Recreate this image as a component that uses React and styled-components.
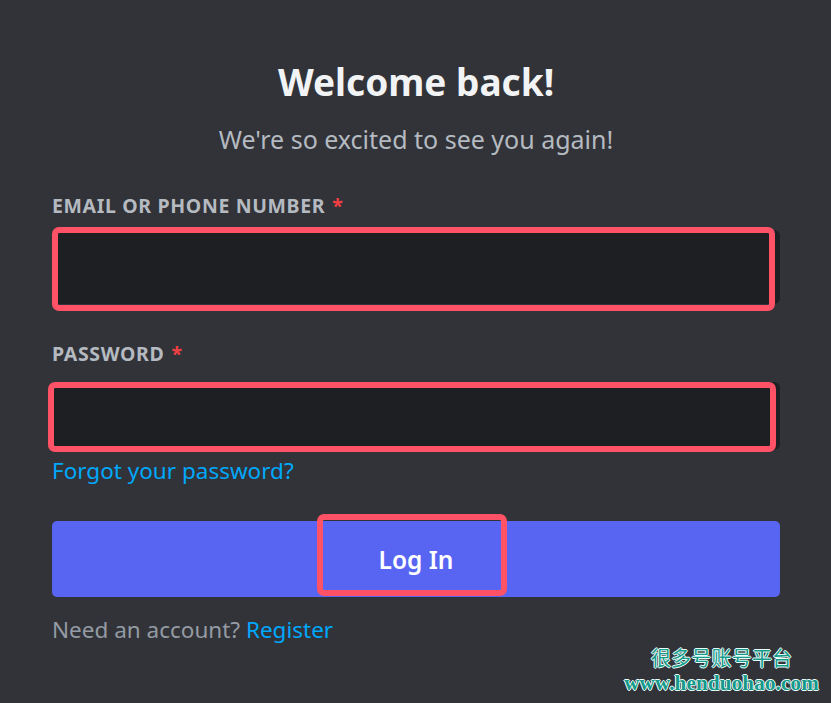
import React from 'react';
import styled, { createGlobalStyle } from 'styled-components';

const GlobalStyle = createGlobalStyle`
  html, body {
    margin: 0;
    padding: 0;
    background: #313338;
  }
  body {
    font-family: "Noto Sans", "Open Sans", sans-serif;
  }
`;

const Page = styled.div`
  position: relative;
  width: 831px;
  height: 703px;
  box-sizing: border-box;
  padding: 56px 51px 0 52px;
  background: #313338;
  overflow: hidden;
`;

const Title = styled.h1`
  margin: 0;
  text-align: center;
  font-size: 37px;
  line-height: 52px;
  font-weight: 700;
  color: #f2f3f5;
`;

const Subtitle = styled.p`
  margin: 14px 0 0;
  text-align: center;
  font-size: 25px;
  line-height: 34px;
  color: #b5bac1;
`;

const Field = styled.div`
  position: relative;
  margin-top: ${(p) => p.$top}px;
`;

const Label = styled.div`
  font-size: 19.5px;
  line-height: 24px;
  font-weight: 700;
  letter-spacing: 0.65px;
  color: #b5bac1;
  margin-bottom: ${(p) => p.$gap}px;
`;

const Req = styled.span`
  color: #f23f43;
  margin-left: 7px;
`;

const Input = styled.div`
  height: ${(p) => p.$h}px;
  border-radius: 6px;
  background: #1e1f22;
`;

const Mark = styled.span`
  position: absolute;
  top: ${(p) => p.$t}px;
  left: ${(p) => p.$l}px;
  width: ${(p) => p.$w}px;
  height: ${(p) => p.$h}px;
  box-sizing: border-box;
  border: 6px solid #ff5266;
  border-radius: 7px;
  pointer-events: none;
`;

const Forgot = styled.div`
  margin-top: 5px;
  line-height: 32px;
`;

const Link = styled.a`
  color: #00a8fc;
  text-decoration: none;
  font-size: 22.5px;
  line-height: 32px;
  cursor: pointer;
`;

const Button = styled.button`
  position: relative;
  display: flex;
  align-items: center;
  justify-content: center;
  width: 100%;
  height: 76px;
  margin-top: ${(p) => p.$top}px;
  padding: 0;
  border: none;
  border-radius: 5px;
  background: #5865f2;
  color: #ffffff;
  font-family: inherit;
  font-size: 24.5px;
  font-weight: 600;
  cursor: pointer;
`;

const Footer = styled.div`
  margin-top: 17px;
  font-size: 22.5px;
  line-height: 32px;
  color: #949ba4;
`;

const Watermark = styled.div`
  position: absolute;
  right: 12px;
  bottom: 8px;
  display: flex;
  flex-direction: column;
  align-items: center;
  color: #16988a;
  text-shadow: 1px 0 #e8fffb, -1px 0 #e8fffb, 0 1px #e8fffb, 0 -1px #e8fffb;
`;

const WmCn = styled.div`
  font-family: "Noto Sans CJK SC", sans-serif;
  font-size: 20px;
  line-height: 26px;
  letter-spacing: 0.2px;
`;

const WmUrl = styled.div`
  font-family: "Liberation Serif", serif;
  font-weight: 700;
  font-size: 21px;
  line-height: 24px;
  letter-spacing: 0.2px;
`;

export default function App() {
  return (
    <Page>
      <GlobalStyle />
      <Title>Welcome back!</Title>
      <Subtitle>We're so excited to see you again!</Subtitle>

      <Field $top={38}>
        <Label $gap={12}>
          EMAIL OR PHONE NUMBER<Req>*</Req>
        </Label>
        <Input $h={74} />
        <Mark $t={33} $l={0} $w={723} $h={84} />
      </Field>

      <Field $top={38}>
        <Label $gap={16}>
          PASSWORD<Req>*</Req>
        </Label>
        <Input $h={68} />
        <Mark $t={40} $l={-4} $w={728} $h={70} />
      </Field>

      <Forgot>
        <Link>Forgot your password?</Link>
      </Forgot>

      <Button $top={32}>
        Log In
        <Mark $t={-7} $l={265} $w={190} $h={82} />
      </Button>

      <Footer>
        Need an account? <Link>Register</Link>
      </Footer>

      <Watermark>
        <WmCn>很多号账号平台</WmCn>
        <WmUrl>www.henduohao.com</WmUrl>
      </Watermark>
    </Page>
  );
}
